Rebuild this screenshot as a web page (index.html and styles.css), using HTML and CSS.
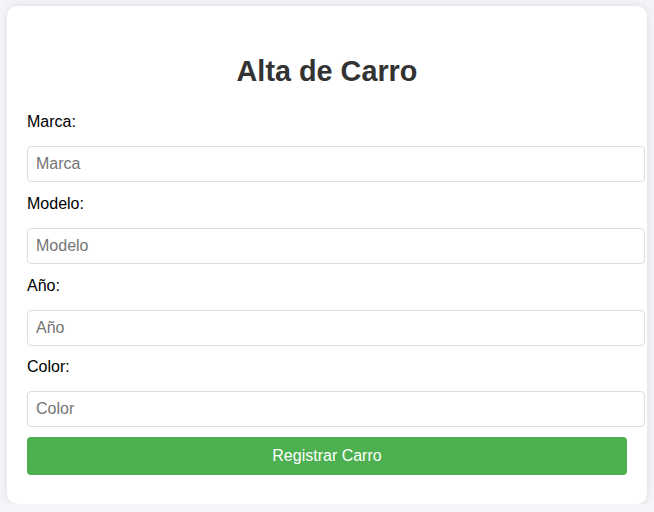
FILE: index.html
```html
<!DOCTYPE html>
<html lang="es">
<head>
<meta charset="utf-8">
<title>Alta de Carro</title>
<link rel="stylesheet" href="styles.css">
</head>
<body>
<div class="card">
  <h2 class="title">Alta de Carro</h2>
  <form class="form">
    <label class="label" for="marca">Marca:</label>
    <input class="input" id="marca" type="text" placeholder="Marca">
    <label class="label" for="modelo">Modelo:</label>
    <input class="input" id="modelo" type="text" placeholder="Modelo">
    <label class="label" for="anio">Año:</label>
    <input class="input" id="anio" type="text" placeholder="Año">
    <label class="label" for="color">Color:</label>
    <input class="input" id="color" type="text" placeholder="Color">
    <button class="btn" type="button">Registrar Carro</button>
  </form>
</div>
</body>
</html>
```
FILE: styles.css
```css
html, body {
  margin: 0;
  padding: 0;
}
body {
  background: #f4f4f9;
  font-family: "Liberation Sans", Arial, sans-serif;
  padding-top: 6px;
}
.card {
  width: 600px;
  margin: 0 auto;
  padding: 20px 20px 28.7px;
  background: #fff;
  border-radius: 10px;
  box-shadow: 0 0 10px rgba(0, 0, 0, 0.1);
}
.title {
  margin: 29px 0 25.3px;
  text-align: center;
  font-size: 28.8px;
  font-weight: bold;
  color: #333;
  line-height: 33px;
}
.form {
  display: flex;
  flex-direction: column;
  align-items: flex-start;
}
.label {
  font-size: 16px;
  line-height: 18.4px;
  color: #000;
  margin-bottom: 14.6px;
}
.input {
  width: 100%;
  padding: 8px;
  font-family: inherit;
  font-size: 16px;
  line-height: 18px;
  height: 18px;
  border: 1px solid #ddd;
  border-radius: 4px;
  margin: 0 0 12.67px;
  color: #333;
}
.input::placeholder {
  color: #757575;
}
.input:last-of-type {
  margin-bottom: 10px;
}
.btn {
  width: 100%;
  height: 38px;
  padding: 10px;
  font-family: inherit;
  font-size: 16px;
  line-height: 18px;
  color: #fff;
  background: #4caf50;
  border: none;
  border-radius: 4px;
  cursor: pointer;
}
```
